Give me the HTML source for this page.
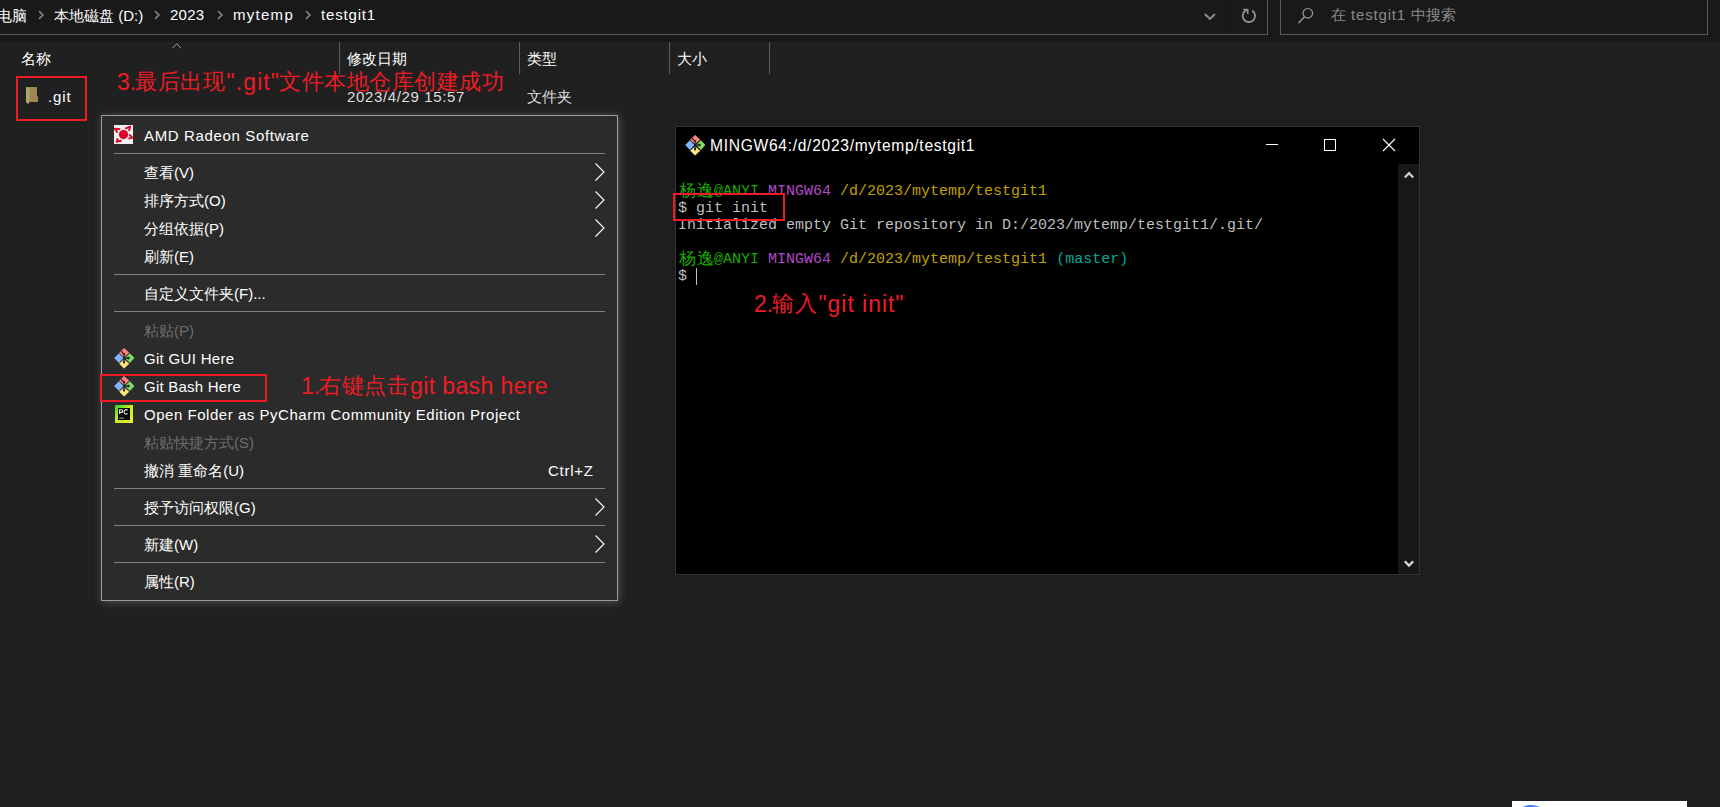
<!DOCTYPE html>
<html lang="zh">
<head>
<meta charset="utf-8">
<title>testgit1</title>
<style>
*{margin:0;padding:0;box-sizing:border-box}
html,body{width:1720px;height:807px;overflow:hidden;background:#202020}
body{position:relative;font-family:"Liberation Sans",sans-serif;font-size:15px;color:#fff}
.a{position:absolute}
svg{position:absolute;overflow:visible}
.t{position:absolute;white-space:nowrap;line-height:28px;font-size:15px;color:#fff}
.red{color:#ed1c24}
.rb{position:absolute;border:2px solid #ed1c24}
.sep{position:absolute;left:12px;width:491px;height:1px;background:#808080}
.vs{position:absolute;top:42px;width:1px;height:32px;background:#5c5c5c}
.dis{color:#6d6d6d}
.k{display:inline-block;text-align:justify;text-align-last:justify;white-space:nowrap}
.mt{position:absolute;left:2px;white-space:pre;font-family:"Liberation Mono",monospace;font-size:15px;line-height:17px;height:17px}
.g{color:#1ca800}.p{color:#b148c6}.y{color:#c0a000}.c{color:#00a89a}.w{color:#bfbfbf}
.cj{display:inline-block;width:18px;height:17px;line-height:17px;text-align:center;font-size:17px;vertical-align:top;overflow:visible}
</style>
</head>
<body>
<!-- top bar -->
<div class="a" style="left:0;top:0;width:1720px;height:42px;background:#191919"></div>
<div class="a" style="left:-2px;top:-2px;width:1270px;height:37px;border:1px solid #5a5a5a"></div>
<div class="a" style="left:1280px;top:-2px;width:428px;height:37px;border:1px solid #5a5a5a"></div>
<span class="t" style="left:-3px;top:2px"><span class="k" style="width:30px">电脑</span></span>
<span class="t" style="left:54px;top:2px"><span class="k" style="width:60px">本地磁盘</span> (D:)</span>
<span class="t" style="left:170px;top:1px;letter-spacing:.26px">2023</span>
<span class="t" style="left:233px;top:1px;letter-spacing:1.28px">mytemp</span>
<span class="t" style="left:321px;top:1px;letter-spacing:.83px">testgit1</span>
<svg style="left:38px;top:10px" width="7" height="10"><path d="M1 1.2 L4.9 5 L1 8.8" fill="none" stroke="#808080" stroke-width="1.7"/></svg>
<svg style="left:154px;top:10px" width="7" height="10"><path d="M1 1.2 L4.9 5 L1 8.8" fill="none" stroke="#808080" stroke-width="1.7"/></svg>
<svg style="left:217px;top:10px" width="7" height="10"><path d="M1 1.2 L4.9 5 L1 8.8" fill="none" stroke="#808080" stroke-width="1.7"/></svg>
<svg style="left:305px;top:10px" width="7" height="10"><path d="M1 1.2 L4.9 5 L1 8.8" fill="none" stroke="#808080" stroke-width="1.7"/></svg>
<!-- dropdown + refresh -->
<div class="a" style="left:1228px;top:0;width:1px;height:34px;background:#151515"></div>
<svg style="left:1204px;top:13px" width="12" height="8"><path d="M.8 1 L5.9 6 L11 1" fill="none" stroke="#8e8e8e" stroke-width="1.8"/></svg>
<svg style="left:1241px;top:8px" width="16" height="16"><path d="M11.2 2.6 A6.2 6.2 0 1 1 3.3 3.7 L6.4 1.7" fill="none" stroke="#8e8e8e" stroke-width="1.9"/><path d="M2 1.45 H6.75 V6" fill="none" stroke="#8e8e8e" stroke-width="1.5"/></svg>
<!-- search -->
<svg style="left:1298px;top:8px" width="16" height="16"><circle cx="9.8" cy="5.3" r="4.8" fill="none" stroke="#9a9a9a" stroke-width="1.2"/><path d="M6.4 8.8 L.4 15.2" stroke="#9a9a9a" stroke-width="1.3"/></svg>
<span class="t" style="left:1331px;top:1px;color:#8a8a8a"><span class="k" style="width:15px;text-align-last:center">在</span><span style="letter-spacing:.83px"> testgit1 </span><span class="k" style="width:45px">中搜索</span></span>

<!-- column headers -->
<svg style="left:172px;top:43px" width="10" height="6"><path d="M.5 5 L4.7 .8 L9 5" fill="none" stroke="#a0a0a0" stroke-width="1"/></svg>
<span class="t" style="left:21px;top:45px"><span class="k" style="width:30px">名称</span></span>
<span class="t" style="left:347px;top:45px"><span class="k" style="width:60px">修改日期</span></span>
<span class="t" style="left:527px;top:45px"><span class="k" style="width:30px">类型</span></span>
<span class="t" style="left:677px;top:45px"><span class="k" style="width:30px">大小</span></span>
<div class="vs" style="left:339px"></div><div class="vs" style="left:519px"></div><div class="vs" style="left:669px"></div><div class="vs" style="left:769px"></div>

<!-- file row -->
<svg style="left:25px;top:86px" width="14" height="19"><path d="M1 1 H12 V10 L13 10.5 V16 H4 Z" fill="#9c8750"/><path d="M1 1 L5 3.5 L4 18 L1 16.5 Z" fill="#b3a272"/></svg>
<span class="t" style="left:48px;top:83px;letter-spacing:.87px">.git</span>
<span class="t" style="left:347px;top:83px;color:#dedede;letter-spacing:.64px">2023/4/29 15:57</span>
<span class="t" style="left:527px;top:83px;color:#dedede"><span class="k" style="width:45px">文件夹</span></span>
<div class="rb" style="left:16px;top:76px;width:71px;height:45px"></div>
<span class="t red" style="left:117px;top:68px;font-size:23px">3.</span><span class="t red" style="left:135.2px;top:68px;font-size:22px;letter-spacing:.5px"><span class="k" style="width:90px">最后出现</span></span><span class="t red" style="left:226.5px;top:68px;font-size:23px;letter-spacing:1.1px">".git"</span><span class="t red" style="left:279.3px;top:68px;font-size:22px;letter-spacing:.5px"><span class="k" style="width:225px">文件本地仓库创建成功</span></span>

<!-- context menu -->
<div id="menu" class="a" style="left:101px;top:115px;width:517px;height:486px;background:#2b2b2b;border:1px solid #9b9b9b;box-shadow:1px 1px 8px rgba(128,128,128,.55)">
<div class="sep" style="top:37px"></div>
<div class="sep" style="top:158px"></div>
<div class="sep" style="top:195px"></div>
<div class="sep" style="top:372px"></div>
<div class="sep" style="top:409px"></div>
<div class="sep" style="top:446px"></div>
<span class="t" style="left:42px;top:6px;letter-spacing:.64px">AMD Radeon Software</span>
<span class="t" style="left:42px;top:43px"><span class="k" style="width:30px">查看</span>(V)</span>
<span class="t" style="left:42px;top:71px"><span class="k" style="width:60px">排序方式</span>(O)</span>
<span class="t" style="left:42px;top:99px"><span class="k" style="width:60px">分组依据</span>(P)</span>
<span class="t" style="left:42px;top:127px"><span class="k" style="width:30px">刷新</span>(E)</span>
<span class="t" style="left:42px;top:164px"><span class="k" style="width:90px">自定义文件夹</span>(F)...</span>
<span class="t dis" style="left:42px;top:201px"><span class="k" style="width:30px">粘贴</span>(P)</span>
<span class="t" style="left:42px;top:229px;letter-spacing:.31px">Git GUI Here</span>
<span class="t" style="left:42px;top:257px;letter-spacing:.22px">Git Bash Here</span>
<span class="t" style="left:42px;top:285px;letter-spacing:.53px">Open Folder as PyCharm Community Edition Project</span>
<span class="t dis" style="left:42px;top:313px"><span class="k" style="width:90px">粘贴快捷方式</span>(S)</span>
<span class="t" style="left:42px;top:341px"><span class="k" style="width:30px">撤消</span> <span class="k" style="width:45px">重命名</span>(U)</span>
<span class="t" style="left:446px;top:341px;letter-spacing:.73px">Ctrl+Z</span>
<span class="t" style="left:42px;top:378px"><span class="k" style="width:90px">授予访问权限</span>(G)</span>
<span class="t" style="left:42px;top:415px"><span class="k" style="width:30px">新建</span>(W)</span>
<span class="t" style="left:42px;top:452px"><span class="k" style="width:30px">属性</span>(R)</span>
<!-- submenu arrows -->
<svg style="left:493px;top:46.5px" width="10" height="18"><path d="M.5 .5 L9 9 L.5 17.5" fill="none" stroke="#fff" stroke-width="1.1"/></svg>
<svg style="left:493px;top:74.5px" width="10" height="18"><path d="M.5 .5 L9 9 L.5 17.5" fill="none" stroke="#fff" stroke-width="1.1"/></svg>
<svg style="left:493px;top:102.5px" width="10" height="18"><path d="M.5 .5 L9 9 L.5 17.5" fill="none" stroke="#fff" stroke-width="1.1"/></svg>
<svg style="left:493px;top:381.5px" width="10" height="18"><path d="M.5 .5 L9 9 L.5 17.5" fill="none" stroke="#fff" stroke-width="1.1"/></svg>
<svg style="left:493px;top:418.5px" width="10" height="18"><path d="M.5 .5 L9 9 L.5 17.5" fill="none" stroke="#fff" stroke-width="1.1"/></svg>
<!-- AMD icon -->
<svg style="left:12px;top:9px" width="19" height="19" viewBox="0 0 19 19"><rect width="19" height="19" fill="#f0f0f0"/><circle cx="9.5" cy="9.6" r="4.6" fill="#dc0028"/><path d="M6.3 4.1 L.8 3.8 L3.6 7.6 M11.2 3.7 L16.2 1.6 L15 6 M15.3 9.3 L18.1 12.7 L14.4 13.5 M3.8 13.2 L2.7 16.9 L7.6 15.5" fill="none" stroke="#e0002a" stroke-width="1.9" stroke-linejoin="round"/></svg>
<!-- git icons -->
<svg style="left:11.75px;top:231.75px" width="20.5" height="20.5" viewBox="0 0 20.5 20.5"><path d="M10.1 0 L15.25 4.75 L10.1 9.3 L5.15 4.75 Z" fill="#ff8181"/><path d="M.2 10.1 L4.95 5.35 L9.55 10.1 L4.95 15.05 Z" fill="#80b3ff"/><path d="M10.95 10.1 L15.85 5.35 L20.45 10.1 L15.85 15.05 Z" fill="#80dd60"/><path d="M5.15 15.65 L10.1 11.15 L15.25 15.65 L10.1 20.45 Z" fill="#ffe680"/><path d="M7.2 3.2 L10.1 6.4 M10.1 6.2 V14.6 M10.1 10.1 H14.4" stroke="#1b1b1b" stroke-width="1.1" fill="none"/><circle cx="10.1" cy="6.1" r="1" fill="#1b1b1b"/><circle cx="14.4" cy="10.1" r="1.3" fill="#1b1b1b"/><ellipse cx="10.1" cy="14.1" rx=".95" ry="1.6" fill="#1b1b1b"/></svg>
<svg style="left:11.75px;top:259.75px" width="20.5" height="20.5" viewBox="0 0 20.5 20.5"><path d="M10.1 0 L15.25 4.75 L10.1 9.3 L5.15 4.75 Z" fill="#ff8181"/><path d="M.2 10.1 L4.95 5.35 L9.55 10.1 L4.95 15.05 Z" fill="#80b3ff"/><path d="M10.95 10.1 L15.85 5.35 L20.45 10.1 L15.85 15.05 Z" fill="#80dd60"/><path d="M5.15 15.65 L10.1 11.15 L15.25 15.65 L10.1 20.45 Z" fill="#ffe680"/><path d="M7.2 3.2 L10.1 6.4 M10.1 6.2 V14.6 M10.1 10.1 H14.4" stroke="#1b1b1b" stroke-width="1.1" fill="none"/><circle cx="10.1" cy="6.1" r="1" fill="#1b1b1b"/><circle cx="14.4" cy="10.1" r="1.3" fill="#1b1b1b"/><ellipse cx="10.1" cy="14.1" rx=".95" ry="1.6" fill="#1b1b1b"/></svg>
<!-- pycharm icon -->
<div class="a" style="left:13px;top:289px;width:18px;height:18px;background:linear-gradient(135deg,#21d72f 0%,#c8e81e 45%,#f4ec3c 100%)"></div><svg style="left:13px;top:289px" width="18" height="18" viewBox="0 0 18 18"><rect x="3" y="3" width="12" height="12" fill="#050a05"/><path d="M4.6 9 V4.8 H6.4 A1.3 1.3 0 0 1 6.4 7.4 H4.6" fill="none" stroke="#e8e8e8" stroke-width="1.1"/><path d="M12.6 5.4 A2.1 2.1 0 1 0 12.6 8.4" fill="none" stroke="#e8e8e8" stroke-width="1.1"/><rect x="4.2" y="12.7" width="4.8" height=".8" fill="#d0d0d0"/></svg>
</div>
<div class="rb" style="left:100px;top:374px;width:167px;height:28px"></div>
<span class="t red" style="left:301px;top:372px;font-size:23px">1.</span><span class="t red" style="left:319.3px;top:372px;font-size:22px;letter-spacing:.5px"><span class="k" style="width:90px">右键点击</span></span><span class="t red" style="left:410px;top:372px;font-size:23px;letter-spacing:.39px">git bash here</span>

<!-- terminal -->
<div id="term" class="a" style="left:675px;top:126px;width:745px;height:449px;background:#000;border:1px solid #333;box-shadow:0 1px 12px rgba(0,0,0,.18)">
<svg style="left:8.5px;top:7.75px" width="20.5" height="20.5" viewBox="0 0 20.5 20.5"><path d="M10.1 0 L15.25 4.75 L10.1 9.3 L5.15 4.75 Z" fill="#ff8181"/><path d="M.2 10.1 L4.95 5.35 L9.55 10.1 L4.95 15.05 Z" fill="#80b3ff"/><path d="M10.95 10.1 L15.85 5.35 L20.45 10.1 L15.85 15.05 Z" fill="#80dd60"/><path d="M5.15 15.65 L10.1 11.15 L15.25 15.65 L10.1 20.45 Z" fill="#ffe680"/><path d="M7.2 3.2 L10.1 6.4 M10.1 6.2 V14.6 M10.1 10.1 H14.4" stroke="#1b1b1b" stroke-width="1.1" fill="none"/><circle cx="10.1" cy="6.1" r="1" fill="#1b1b1b"/><circle cx="14.4" cy="10.1" r="1.3" fill="#1b1b1b"/><ellipse cx="10.1" cy="14.1" rx=".95" ry="1.6" fill="#1b1b1b"/></svg>
<span class="t" style="left:34px;top:4.6px;font-size:15.6px;letter-spacing:.7px">MINGW64:/d/2023/mytemp/testgit1</span>
<div class="a" style="left:590px;top:17px;width:12px;height:1px;background:#fff"></div>
<div class="a" style="left:648px;top:12px;width:12px;height:12px;border:1px solid #fff"></div>
<svg style="left:707px;top:12px" width="12" height="12"><path d="M0 0 L12 12 M12 0 L0 12" stroke="#fff" stroke-width="1.1"/></svg>
<div class="a" style="left:722px;top:37px;width:21px;height:410px;background:#171717"></div>
<svg style="left:728px;top:44px" width="10" height="8"><path d="M.8 6.6 L5 2.2 L9.2 6.6" fill="none" stroke="#cfcfcf" stroke-width="2.2"/></svg>
<svg style="left:728px;top:433px" width="10" height="8"><path d="M.8 1.2 L5 5.6 L9.2 1.2" fill="none" stroke="#d8d8d8" stroke-width="2.2"/></svg>
<div class="mt" style="top:56px"><span class="g"><span class="cj">杨</span><span class="cj">逸</span>@ANYI</span> <span class="p">MINGW64</span> <span class="y">/d/2023/mytemp/testgit1</span></div>
<div class="mt w" style="top:73px">$ git init</div>
<div class="mt w" style="top:90px">Initialized empty Git repository in D:/2023/mytemp/testgit1/.git/</div>
<div class="mt" style="top:124px"><span class="g"><span class="cj">杨</span><span class="cj">逸</span>@ANYI</span> <span class="p">MINGW64</span> <span class="y">/d/2023/mytemp/testgit1</span> <span class="c">(master)</span></div>
<div class="mt w" style="top:141px">$ </div>
<div class="a" style="left:20px;top:141px;width:1px;height:17px;background:#bfbfbf"></div>
</div>
<div class="rb" style="left:673px;top:193px;width:112px;height:28px"></div>
<span class="t red" style="left:754px;top:290px;font-size:23px">2.</span><span class="t red" style="left:772.4px;top:290px;font-size:22px;letter-spacing:.5px"><span class="k" style="width:45px">输入</span></span><span class="t red" style="left:818.5px;top:290px;font-size:23px;letter-spacing:.95px">"git init"</span>

<!-- bottom-right -->
<div class="a" style="left:1512px;top:801px;width:175px;height:10px;background:#fff"></div>
<div class="a" style="left:1511px;top:804.6px;width:40px;height:40px;border-radius:20px;background:#4a7bf7"></div>


</body>
</html>
